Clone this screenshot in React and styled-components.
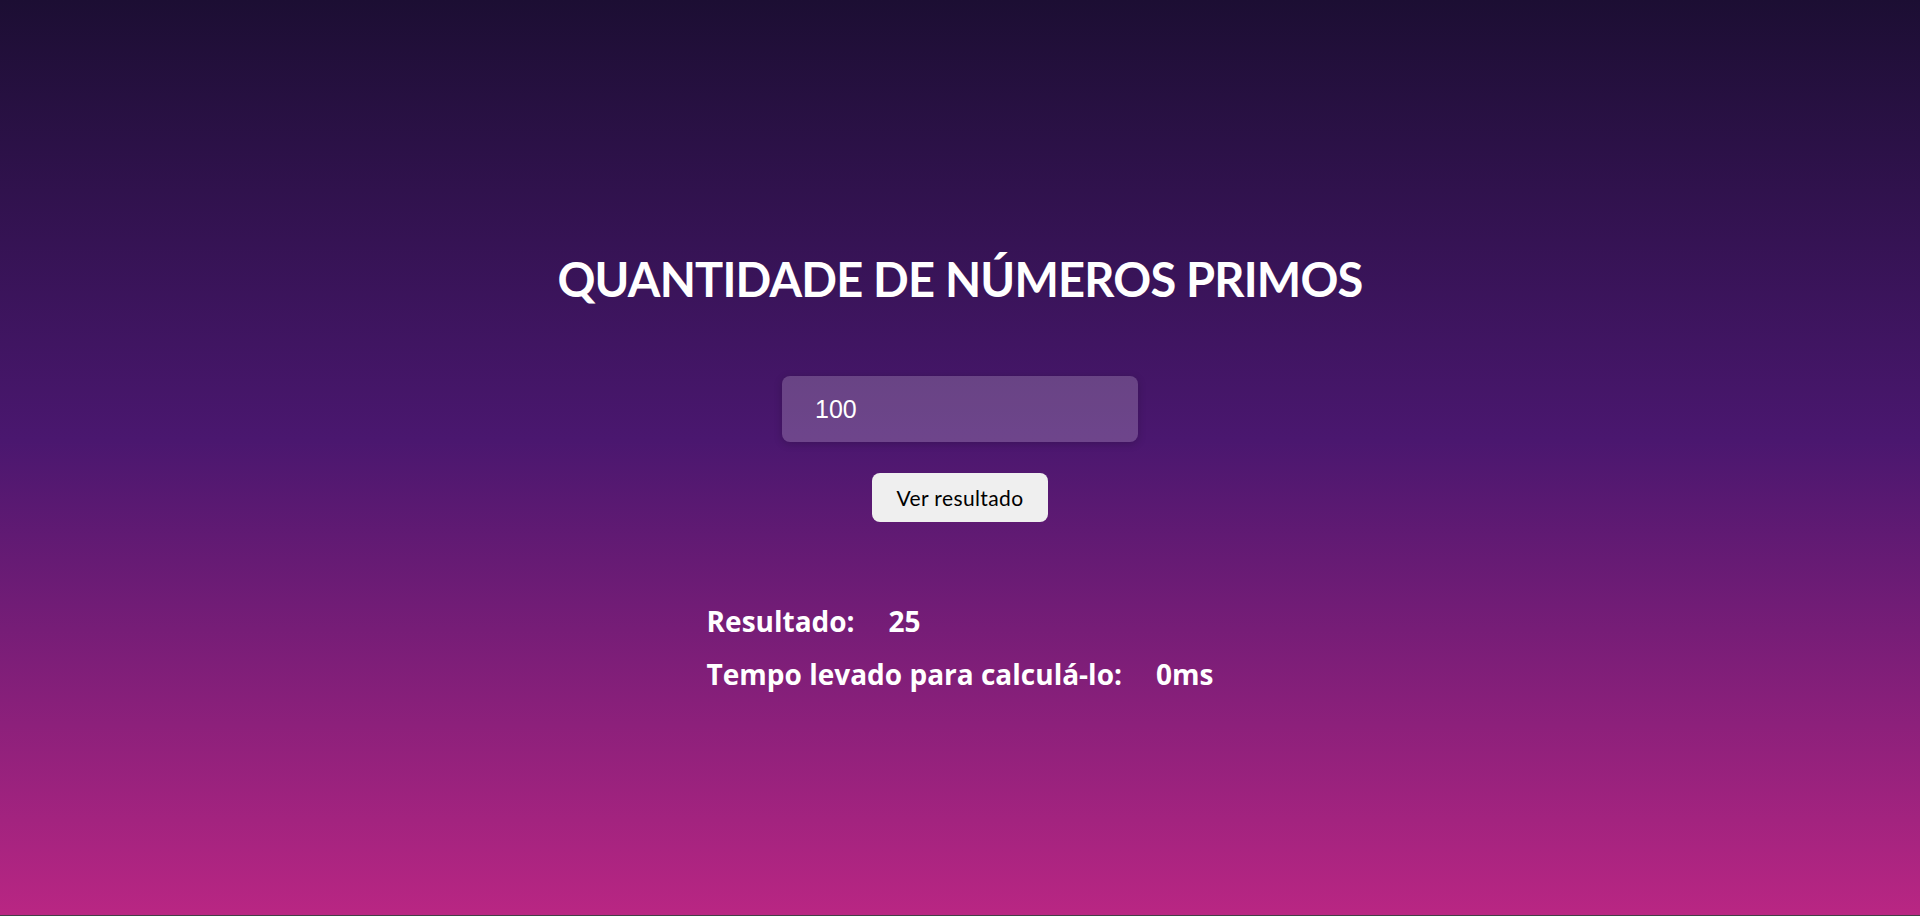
import React from "react";
import styled, { createGlobalStyle } from "styled-components";

const Global = createGlobalStyle`
  html, body { margin: 0; padding: 0; background: #444047; }
  body { font-family: Lato, "Open Sans", sans-serif; }
  * { box-sizing: border-box; }
`;

const Page = styled.main`
  min-height: calc(100vh - 1px);
  background: linear-gradient(to bottom, #1c0e33 0%, #4a176f 48%, #b92683 100%);
  display: flex;
  flex-direction: column;
  align-items: center;
  padding-top: 250px;
  color: #fff;
`;

const Title = styled.h1`
  margin: 0;
  font-family: Lato, sans-serif;
  font-weight: 700;
  font-size: 47px;
  line-height: 58px;
  letter-spacing: -0.8px;
`;

const Input = styled.input`
  margin-top: 68px;
  width: 356px;
  height: 66px;
  border: none;
  border-radius: 8px;
  background: rgba(255, 255, 255, 0.2);
  box-shadow: 0 2px 8px rgba(0, 0, 0, 0.18);
  color: #fff;
  font-family: "Liberation Sans", Arial, sans-serif;
  font-size: 25px;
  padding: 0 0 0 33px;
  outline: none;
`;

const Button = styled.button`
  margin-top: 31px;
  width: 176px;
  height: 49px;
  border: none;
  border-radius: 8px;
  background: #efefef;
  color: #000;
  font-family: Lato, sans-serif;
  font-size: 21px;
  letter-spacing: 0.4px;
  cursor: pointer;
`;

const Results = styled.section`
  margin-top: 73px;
  display: flex;
  flex-direction: column;
  align-items: flex-start;
`;

const Row = styled.div`
  display: flex;
  gap: 34px;
  font-family: "Open Sans", sans-serif;
  font-weight: 700;
  font-size: 28px;
  line-height: 53px;
`;

export default function App() {
  return (
    <>
      <Global />
      <Page>
        <Title>QUANTIDADE DE NÚMEROS PRIMOS</Title>
        <Input type="number" defaultValue="100" />
        <Button>Ver resultado</Button>
        <Results>
          <Row>
            <span>Resultado:</span>
            <span>25</span>
          </Row>
          <Row>
            <span>Tempo levado para calculá-lo:</span>
            <span>0ms</span>
          </Row>
        </Results>
      </Page>
    </>
  );
}
